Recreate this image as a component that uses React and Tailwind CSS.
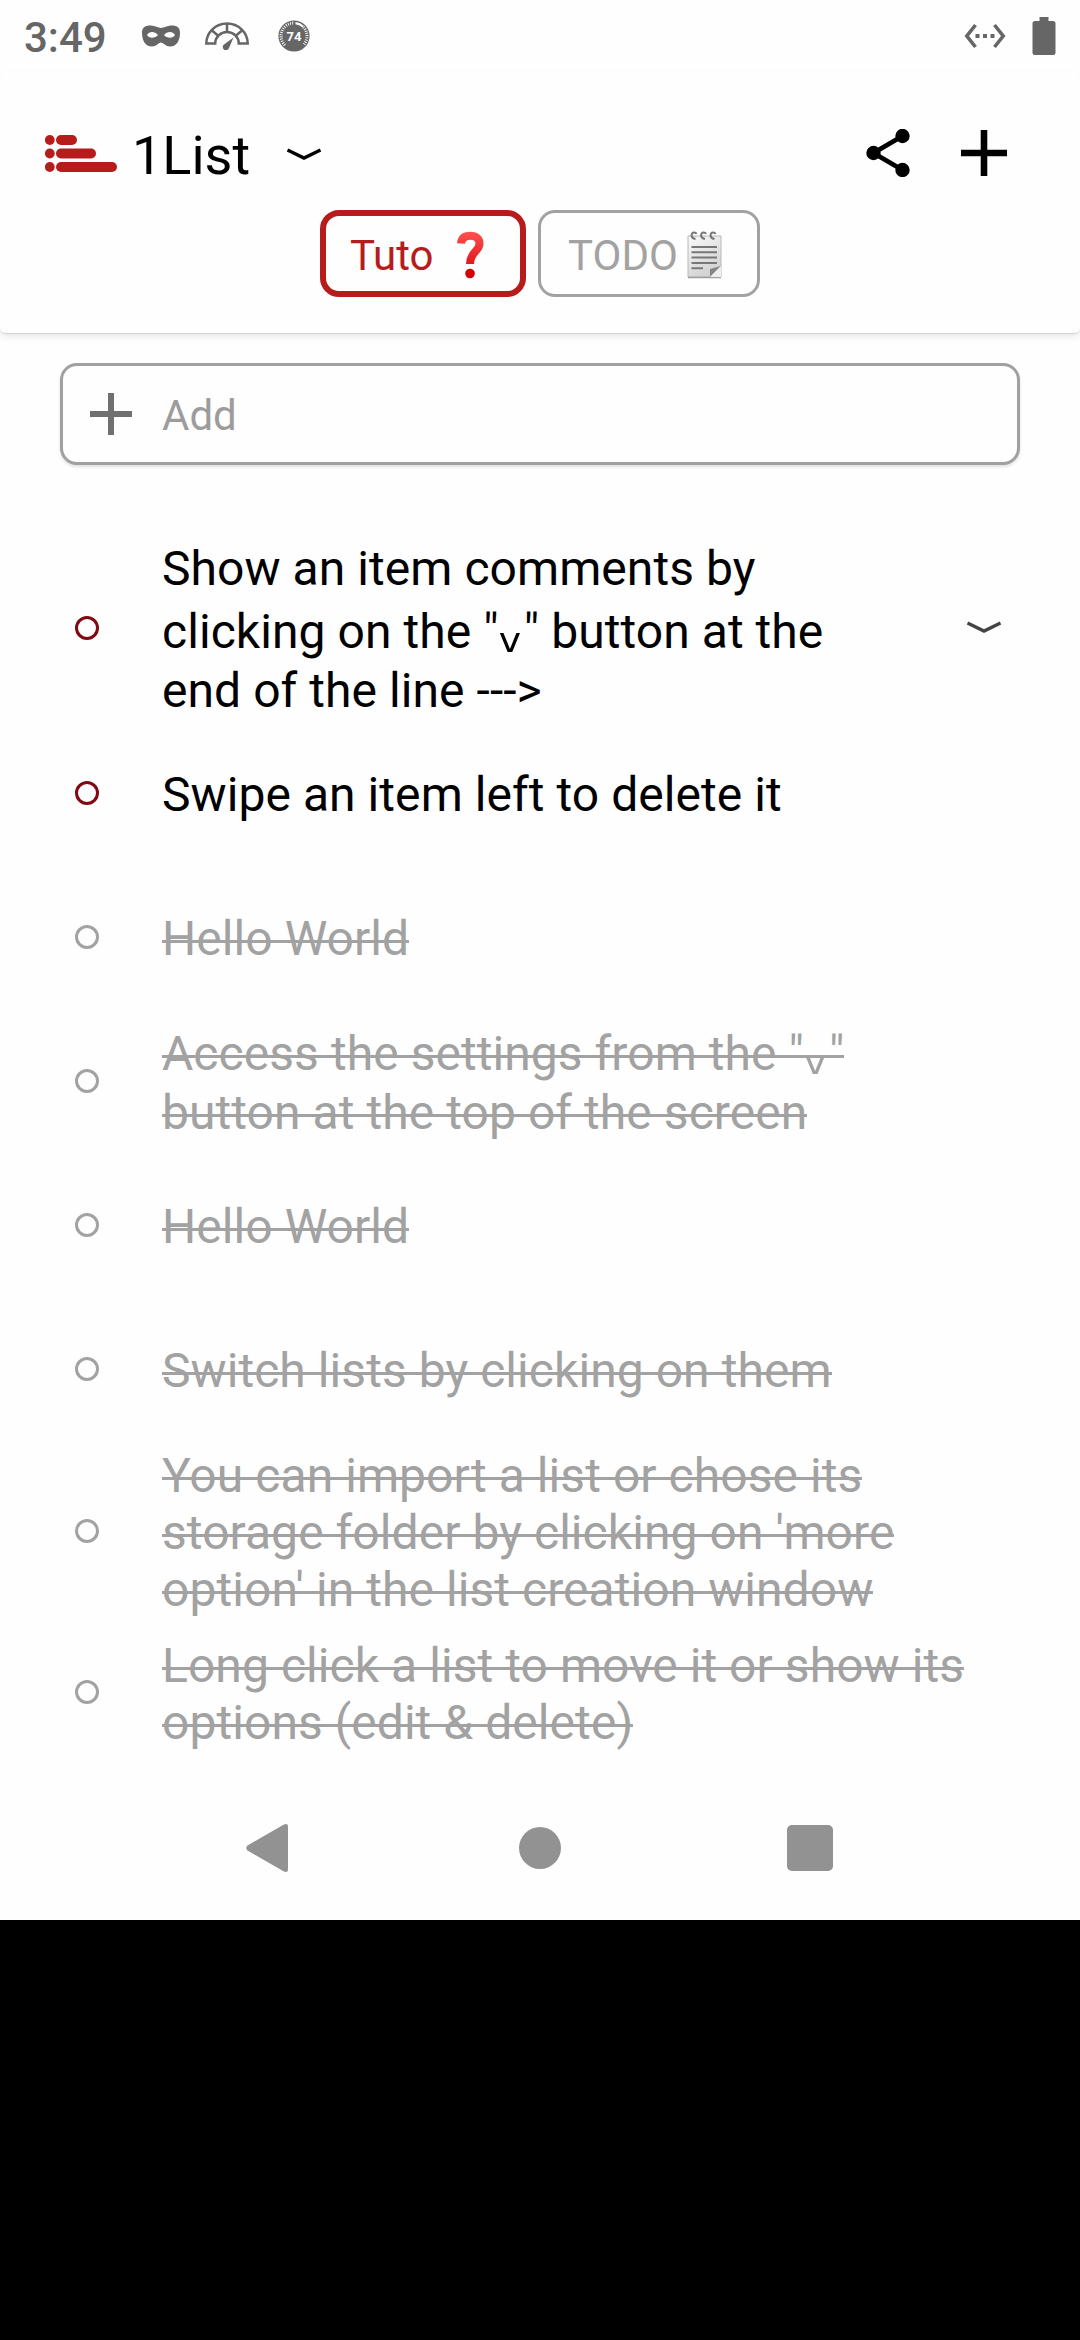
const items = [
  { text: ['Show an item comments by', 'clicking on the "ᵥ" button at the', 'end of the line --->'], height: 'h-[184px]', more: true, lines: ['h-[59px]', 'h-[63px]', 'h-[59px]'] },
  { text: ['Swipe an item left to delete it'], height: 'h-[145px]' },
  { text: ['Hello World'], height: 'h-[144px]', done: true },
  { text: ['Access the settings from the "ᵥ"', 'button at the top of the screen'], height: 'h-[144px]', done: true, lines: ['h-[59px]', 'h-[59px]'] },
  { text: ['Hello World'], height: 'h-[144px]', done: true },
  { text: ['Switch lists by clicking on them'], height: 'h-[144px]', done: true },
  { text: ['You can import a list or chose its', "storage folder by clicking on 'more", 'option\' in the list creation window'], height: 'h-[180px]', done: true },
  { text: ['Long click a list to move it or show its', 'options (edit & delete)'], height: 'h-[142px]', done: true },
];

function Chevron({ className }) {
  return (
    <svg className={className} width="36" height="14" viewBox="0 0 36 14" fill="none" stroke="currentColor" strokeWidth="3.4">
      <path d="M1.5 2 L18 10 L34.5 2" />
    </svg>
  );
}

function StatusBar() {
  return (
    <div className="flex h-[72px] items-center pl-[24px] pr-[24px] text-[#666666]">
      <span className="w-[118px] pt-[3px] text-[42px] leading-[49px] font-medium">3:49</span>
      <svg width="38" height="22" viewBox="0 0 38 22" fill="currentColor" fillRule="evenodd">
        <path d="M9 0.5 C13 .5 16 3 19 3 C22 3 25 .5 29 .5 C36 .5 38 3 38 8 C38 15 35 21.5 28 21.5 C23.5 21.5 21.500 17.500 19 17.500 C16.500 17.500 14.500 21.500 10 21.500 C3 21.500 0 15 0 8 C0 3 2 .5 9 .5Z M5 10 C7 13.500 13 13.500 16 10 C13 6 7 6 5 10Z M22 10 C25 13.500 31 13.500 33 10 C31 6 25 6 22 10Z" />
      </svg>
      <svg className="ml-[25px]" width="44" height="28" viewBox="0 0 44 28" fill="none" stroke="currentColor" strokeWidth="2.5">
        <path d="M1.300 21.500 A20.700 20 0 0 1 42.700 21.500 H33.800 A11.800 11.500 0 0 0 10.200 21.500Z" />
        <path d="M7 8.500 L13.500 14 M22 1.500 V10 M37 8.500 L30.500 14" />
        <path d="M28.500 15.500 L19 22.500 A3.200 3.200 0 1 0 24 26Z" fill="currentColor" stroke="none" />
      </svg>
      <svg className="ml-[29px]" width="32" height="32" viewBox="0 0 32 32">
        <circle cx="16" cy="16" r="15.600" fill="#666666" />
        <path d="M6.800 25.200 A13 13 0 0 1 16 3" fill="none" stroke="#ffffff" strokeWidth="3" strokeDasharray="0.9 1.300" />
        <path d="M17.500 3.100 A13 13 0 0 1 25.200 6.800" fill="none" stroke="#ffffff" strokeWidth="2.200" />
        <path d="M25.500 7.200 A13 13 0 0 1 25.200 25.200" fill="none" stroke="#ffffff" strokeWidth="3" strokeDasharray="0.9 1.300" />
        <text x="16" y="20.500" textAnchor="middle" fontSize="13" fontWeight="700" fill="#ffffff">74</text>
      </svg>
      <div className="flex-1" />
      <svg width="42" height="26" viewBox="0 0 42 26" fill="none" stroke="currentColor" strokeWidth="3.600">
        <path d="M11.500 2 L2.800 13 L11.500 24 M30.500 2 L39.200 13 L30.500 24" />
        <path d="M11.500 13 H31" strokeWidth="4" strokeDasharray="4 3.500" />
      </svg>
      <svg className="ml-[26px]" width="24" height="40" viewBox="0 0 24 40" fill="currentColor">
        <path d="M7.500 1 H16.500 V5 H21 Q23.500 5 23.500 7.500 V36.500 Q23.500 39 21 39 H3 Q.5 39 .5 36.500 V7.500 Q.5 5 3 5 H7.500Z" />
      </svg>
    </div>
  );
}

function Logo() {
  return (
    <svg className="mt-[2px]" width="72" height="38" viewBox="0 0 72 38" fill="#b71c1c">
      <circle cx="4.800" cy="5" r="4.900" />
      <circle cx="4.800" cy="18.500" r="4.900" />
      <circle cx="4.800" cy="32" r="4.900" />
      <rect x="11" y="0" width="21" height="10" rx="5" />
      <rect x="11" y="13.500" width="40" height="10" rx="5" />
      <rect x="11" y="27" width="61" height="10" rx="5" />
    </svg>
  );
}

function QuestionMark() {
  return (
    <svg width="30" height="48" viewBox="0 0 30 48">
      <defs>
        <linearGradient id="question" x1="0" y1="0" x2="0" y2="48" gradientUnits="userSpaceOnUse">
          <stop offset="0" stopColor="#ff5252" />
          <stop offset="1" stopColor="#d50000" />
        </linearGradient>
      </defs>
      <path d="M5 12.500 C5.500 7 9 4.700 14.500 4.700 C20 4.700 23.500 7.500 23.500 12.500 C23.500 20.500 14 20.500 14 33" fill="none" stroke="url(#question)" strokeWidth="8" />
      <circle cx="14" cy="42.500" r="4.800" fill="#d50000" />
    </svg>
  );
}

function Notepad() {
  return (
    <svg width="35" height="48" viewBox="0 0 35 48">
      <defs>
        <linearGradient id="paper" x1="0" y1="0" x2="0.500" y2="1">
          <stop offset="0" stopColor="#fafafa" />
          <stop offset="1" stopColor="#d2d2d2" />
        </linearGradient>
      </defs>
      <path d="M1 5 H34 V46 H1Z" fill="url(#paper)" stroke="#b8b8b8" strokeWidth="1" />
      <path d="M1 46.500 H34" stroke="#a0a0a0" strokeWidth="1.500" />
      <path d="M4.500 16 H30 M4.500 21.300 H30 M4.500 26.600 H30 M4.500 32 H30 M4.500 37.300 H16" stroke="#777777" strokeWidth="2" />
      <path d="M23 46 V38 L34 35Z" fill="#858585" />
      <path d="M23 46 L34 35 V46Z" fill="#eeeeee" />
      <path d="M8.500 8 C3 7 4 1.500 7 1.500 Q9 1.500 9.500 3 M18 8 C12.500 7 13.500 1.500 16.500 1.500 Q18.500 1.500 19 3 M27.500 8 C22 7 23 1.500 26 1.500 Q28 1.500 28.500 3" fill="none" stroke="#777777" strokeWidth="2" />
    </svg>
  );
}

function Header() {
  return (
    <header className="relative h-[261px] rounded-[5px] bg-[#fefefe] shadow-[0_1px_1px_rgba(0,0,0,0.12),0_4px_8px_-1px_rgba(0,0,0,0.1)]">
      <div className="flex h-[138px] items-center pt-[24px] pl-[45px] pr-[72px]">
        <Logo />
        <h1 className="ml-[15px] pt-[5px] text-[54px] leading-[64px] font-normal text-black">1List</h1>
        <Chevron className="mt-[3px] ml-[36px] text-black" />
        <div className="flex-1" />
        <svg width="44" height="48" viewBox="0 0 44 48">
          <path d="M36.500 7 L7.500 24 L36.500 41" fill="none" stroke="#000" strokeWidth="4.800" />
          <circle cx="36.500" cy="7" r="7.200" />
          <circle cx="7.500" cy="24" r="7.200" />
          <circle cx="36.500" cy="41" r="7.200" />
        </svg>
        <svg className="ml-[50px]" width="48" height="48" viewBox="0 0 48 48" fill="none" stroke="#000" strokeWidth="6.600">
          <path d="M24 1 V47 M1 24 H47" />
        </svg>
      </div>
      <div className="flex gap-[12px] pl-[320px] text-[42px] leading-[49px]">
        <button className="flex h-[87px] w-[206px] items-center rounded-[19px] border-[6px] border-[#b71c1c] pt-[3px] pl-[24px] text-[#b71c1c]">
          <span className="w-[106px] text-left">Tuto</span>
          <QuestionMark />
        </button>
        <button className="flex h-[87px] w-[222px] items-center rounded-[17px] border-[3px] border-[#a2a2a2] pt-[3px] pl-[27px] text-[#a2a2a2]">
          <span className="w-[119px] text-left">TODO</span>
          <Notepad />
        </button>
      </div>
    </header>
  );
}

/* The subscript letter comes from a wider face than the text around it. */
function Line({ text }) {
  const [before, after] = text.split('ᵥ');
  return (
    <>
      {before}
      {after !== undefined && <span className="align-[-4px] font-['DejaVu_Sans'] text-[60px] leading-[0]">ᵥ</span>}
      {after}
    </>
  );
}

function Item({ item }) {
  return (
    <li className={`flex items-center pl-[75px] pr-[78px] ${item.height}`}>
      <span className={`size-[24px] rounded-full border-[3px] ${item.done ? 'border-[#a2a2a2]' : 'border-[#800a12]'}`} />
      <div className={`ml-[63px] flex-1 text-[48px] leading-[57px] tracking-[0.06px] whitespace-nowrap ${item.lines ? 'pt-[1px]' : 'pt-[3px]'} ${item.done ? 'text-[#a2a2a2]' : 'text-black'}`}>
        {item.text.map((line, i) => (
          <div key={line} className={`flex flex-col justify-end ${item.lines ? item.lines[i] : 'h-[57px]'}`}>
            {/* One bar strikes the whole line, so mixed glyph sizes do not break it. */}
            <span className={`self-start ${item.done ? "relative after:absolute after:inset-x-0 after:top-[30px] after:h-[3px] after:bg-[#a2a2a2] after:content-['']" : ''}`}>
              <Line text={line} />
            </span>
          </div>
        ))}
      </div>
      {item.more && <Chevron className="text-[#444444]" />}
    </li>
  );
}

export default function App() {
  return (
    <div className="h-[2340px] w-[1080px] overflow-hidden bg-black font-['Roboto','DejaVu_Sans',sans-serif]">
      <div className="flex h-[1920px] flex-col bg-[#fefefe]">
        <StatusBar />
        <Header />
        <div className="mx-[60px] mt-[30px] flex h-[102px] items-center rounded-[17px] border-[3px] border-[#a0a0a0] bg-[#fefefe] pl-[27px] shadow-[0_2px_3px_rgba(0,0,0,0.12)]">
          <svg width="42" height="42" viewBox="0 0 42 42" stroke="#707070" strokeWidth="6">
            <path d="M21 0 V42 M0 21 H42" />
          </svg>
          <span className="ml-[30px] pt-[2px] text-[42px] leading-[49px] text-[#9c9c9c]">Add</span>
        </div>
        <ul className="mt-[71px] h-[1240px]">
          {items.map((item, i) => (
            <Item key={i} item={item} />
          ))}
        </ul>
        <nav className="flex h-[143px] items-center pl-[246px]">
          <svg width="42" height="48" viewBox="0 0 42 48" fill="#929292">
            <path d="M37.500 .8 Q42 -1.500 42 3 V45 Q42 49.500 37.500 47.200 L1.500 26.500 Q-1 24 1.500 21.500Z" />
          </svg>
          <span className="ml-[231px] size-[42px] rounded-full bg-[#929292]" />
          <span className="ml-[226px] size-[46px] rounded-[5px] bg-[#929292]" />
        </nav>
      </div>
    </div>
  );
}
